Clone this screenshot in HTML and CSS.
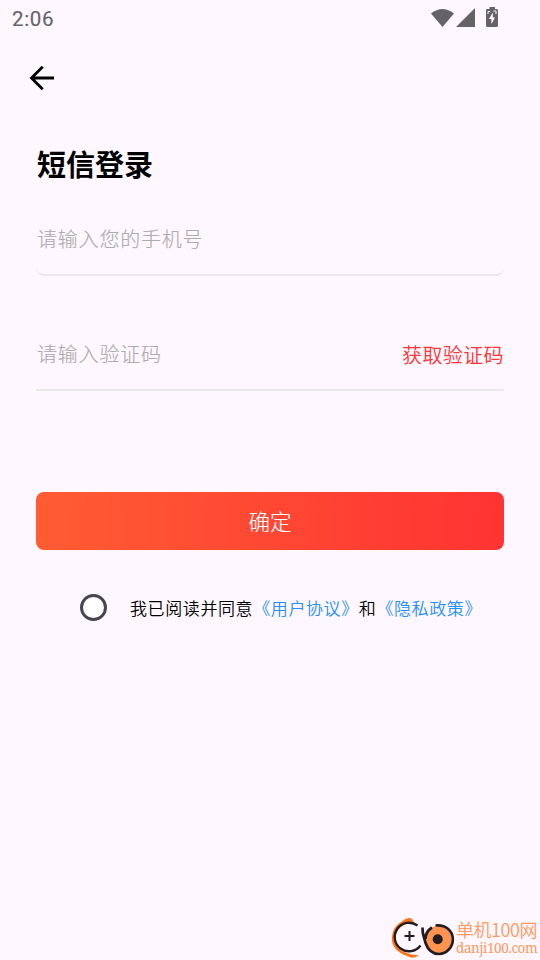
FILE: index.html
```
<!DOCTYPE html>
<html lang="zh-CN">
<head>
<meta charset="utf-8">
<title>短信登录</title>
<link rel="stylesheet" href="styles.css">
</head>
<body>
<div class="screen">
  <header class="status">
    <span class="time">2:06</span>
    <svg class="status-icons" width="70" height="24" viewBox="0 0 70 24" fill="#666368">
      <path d="M1 6.500Q12.400-2.500 24 6.500L12.500 20Z" transform="translate(0 1)"/>
      <path d="M26 21L45 2V21Z"/>
      <path d="M57 3H59.500V1H65V3H66.500Q68 3 68 4.500V19.500Q68 21 66.500 21H57.500Q56 21 56 19.500V4.500Q56 3 57 3Z"/>
      <path d="M62.800 6.500L59 13H61.400V18L65 11.500H62.800Z" fill="#fff"/>
      <path d="M58 8V5.500H60M63.500 5H66V8" fill="none" stroke="#fff" stroke-width="1"/>
    </svg>
  </header>
  <nav class="nav">
    <svg width="26" height="26" viewBox="0 0 26 26" fill="none" stroke="#000" stroke-width="2.800">
      <path d="M25 13H3M13.700 1.800L2.500 13L13.700 24.200"/>
    </svg>
  </nav>
  <main class="form">
    <h1 class="title">短信登录</h1>
    <div class="field field-rounded"><span class="hint">请输入您的手机号</span></div>
    <div class="field field-code"><span class="hint">请输入验证码</span><span class="get-code">获取验证码</span></div>
    <div class="submit">确定</div>
    <div class="agree"><span class="radio"></span><span class="terms">我已阅读并同意<span class="link">《用户协议》</span>和<span class="link">《隐私政策》</span></span></div>
  </main>
  <footer class="brand">
    <svg width="66" height="42" viewBox="0 0 66 42" fill="none">
      <path d="M12.500 4Q18-1 22 2L24 5.500Q13 6 8 13C3 21 7 31 13 34.500Q20 38 28.500 38Q24 43 17 39C5 35 1 27 2 20C3 10 8 7 12.500 4Z" fill="#ff7418"/>
      <path d="M27.500 8.500A14.300 14.300 0 1 0 30.500 28.500" stroke="#221d20" stroke-width="2.400"/>
      <path d="M19.500 14V24M14.500 19H24.500" stroke="#221d20" stroke-width="2"/>
      <circle cx="48" cy="22.500" r="13.500" fill="#ff9450"/>
      <path d="M32.500 10.500C32 17 34.500 21 35.500 26C38 33 43 37 49 37A14.500 14.500 0 0 0 62.800 22.500C63 14 56 7.500 45.500 8.500M42 10.500C38 13 35.500 17 35.500 22" stroke="#221d20" stroke-width="2.700"/>
      <circle cx="47.700" cy="22.300" r="5" fill="#221d20"/>
    </svg>
    <div class="brand-text"><span class="brand-name">单机100网</span><span class="brand-url">danji100.com</span></div>
  </footer>
</div>
</body>
</html>
```
FILE: styles.css
```
* { box-sizing: border-box; }
body {
  margin: 0;
  background: #fef7ff;
  font-family: "Noto Sans CJK SC", sans-serif;
  font-weight: 300;
  color: #000;
}
.screen { width: 540px; height: 960px; display: flex; flex-direction: column; overflow: hidden; }
.status {
  height: 38px;
  padding: 6px 40px 0 12px;
  display: flex;
  justify-content: space-between;
}
.time {
  font: 450 20.500px/26px Roboto, sans-serif;
  letter-spacing: 0.650px;
  color: #666368;
  -webkit-text-stroke: 0.150px #666368;
}
.nav { height: 80px; padding: 27px 0 0 29px; }
.nav svg { display: block; }
.form { padding: 0 36px; display: flex; flex-direction: column; flex: 1; }
.title {
  margin: 23px 0 1px;
  padding-left: 1px;
  font-size: 29px;
  line-height: 44px;
  font-weight: 700;
}
.field {
  height: 62px;
  margin-top: 28px;
  padding: 10px 0 0 1px;
  display: flex;
  justify-content: space-between;
  border-bottom: 2px solid #ebe8ec;
  line-height: 30px;
}
.field-rounded { border-radius: 8px; }
.field-code { margin-top: 53px; }
.hint {
  font-size: 20px;
  letter-spacing: 0.800px;
  color: #aeabae;
  -webkit-text-stroke: 0.150px #aeabae;
}
.get-code { font-size: 20px; font-weight: 350; letter-spacing: 0.400px; color: #ff3434; padding-top: 1px; }
.submit {
  height: 58px;
  margin-top: 101px;
  border-radius: 8px;
  background: linear-gradient(90deg, #ff5c33, #ff3333);
  color: #fff;
  font-size: 21.500px;
  line-height: 57px;
  text-align: center;
  -webkit-text-stroke: 0.150px #fff;
}
.agree { display: flex; align-items: center; margin: 43px 0 0 44px; height: 29px; }
.radio { width: 27px; height: 27px; border: 3px solid #49454f; border-radius: 50%; background: #fff; }
.terms { margin-left: 23px; font-size: 17px; font-weight: 350; letter-spacing: 0.600px; white-space: nowrap; }
.link { color: #1e90ff; }
.brand { display: flex; align-self: flex-end; height: 43px; }
.brand-text { width: 84px; padding-top: 1px; display: flex; flex-direction: column; color: #ff9a5c; white-space: nowrap; }
.brand-name { font-size: 18px; font-weight: 350; line-height: 23px; letter-spacing: -0.450px; }
.brand-url { font: 13.500px/15px "Noto Serif", "DejaVu Serif Condensed", "DejaVu Serif", serif; letter-spacing: -0.400px; }
```
